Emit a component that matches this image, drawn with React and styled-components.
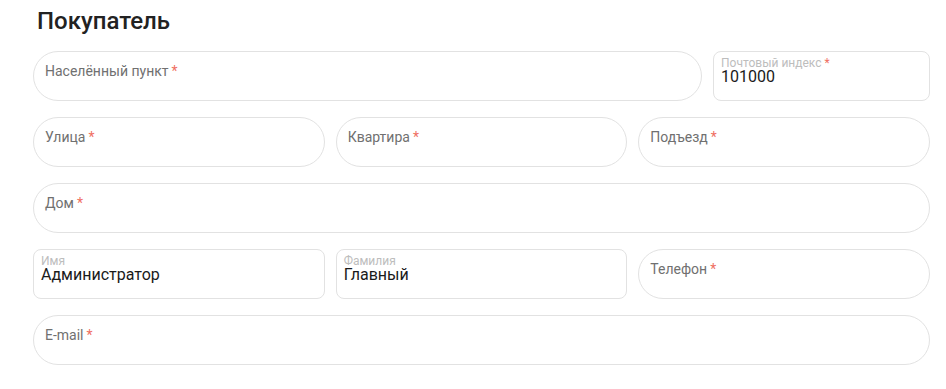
import React from 'react';
import styled, { createGlobalStyle } from 'styled-components';

const GlobalStyle = createGlobalStyle`
  body {
    margin: 0;
    background: #fff;
    font-family: Roboto, "Liberation Sans", Arial, sans-serif;
  }
`;

const Page = styled.div`
  width: 897px;
  padding: 7px 0 0 33px;
`;

const Title = styled.h2`
  margin: 0 0 16px 4px;
  font-size: 24px;
  font-weight: 500;
  line-height: 28px;
  color: #222;
`;

const Form = styled.div`
  display: flex;
  flex-direction: column;
  gap: 16px;
`;

const Row = styled.div`
  display: grid;
  grid-template-columns: ${(p) => p.$cols || '1fr'};
  column-gap: 11px;
`;

const Field = styled.div`
  box-sizing: border-box;
  height: 50px;
  border: 1px solid #e2e2e2;
  border-radius: ${(p) => (p.$filled ? '8px' : '25px')};
  padding: ${(p) => (p.$filled ? '6px 7px' : '11px 11px')};
  background: #fff;
`;

const Label = styled.div`
  font-size: ${(p) => (p.$small ? '12px' : '14px')};
  line-height: ${(p) => (p.$small ? '11px' : '16px')};
  color: ${(p) => (p.$small ? '#bdbdbd' : '#707070')};
  white-space: nowrap;
`;

const Star = styled.span`
  color: #ef6f62;
  margin-left: 3px;
`;

const Value = styled.div`
  font-size: 16px;
  line-height: 16px;
  color: #1a1a1a;
`;

const Input = ({ label, required, value }) => (
  <Field $filled={!!value}>
    <Label $small={!!value}>
      {label}
      {required && <Star>*</Star>}
    </Label>
    {value && <Value>{value}</Value>}
  </Field>
);

export default function App() {
  return (
    <>
      <GlobalStyle />
      <Page>
        <Title>Покупатель</Title>
        <Form>
          <Row $cols="1fr 217px">
            <Input label="Населённый пункт" required />
            <Input label="Почтовый индекс" required value="101000" />
          </Row>
          <Row $cols="1fr 1fr 1fr">
            <Input label="Улица" required />
            <Input label="Квартира" required />
            <Input label="Подъезд" required />
          </Row>
          <Row>
            <Input label="Дом" required />
          </Row>
          <Row $cols="1fr 1fr 1fr">
            <Input label="Имя" value="Администратор" />
            <Input label="Фамилия" value="Главный" />
            <Input label="Телефон" required />
          </Row>
          <Row>
            <Input label="E-mail" required />
          </Row>
        </Form>
      </Page>
    </>
  );
}
